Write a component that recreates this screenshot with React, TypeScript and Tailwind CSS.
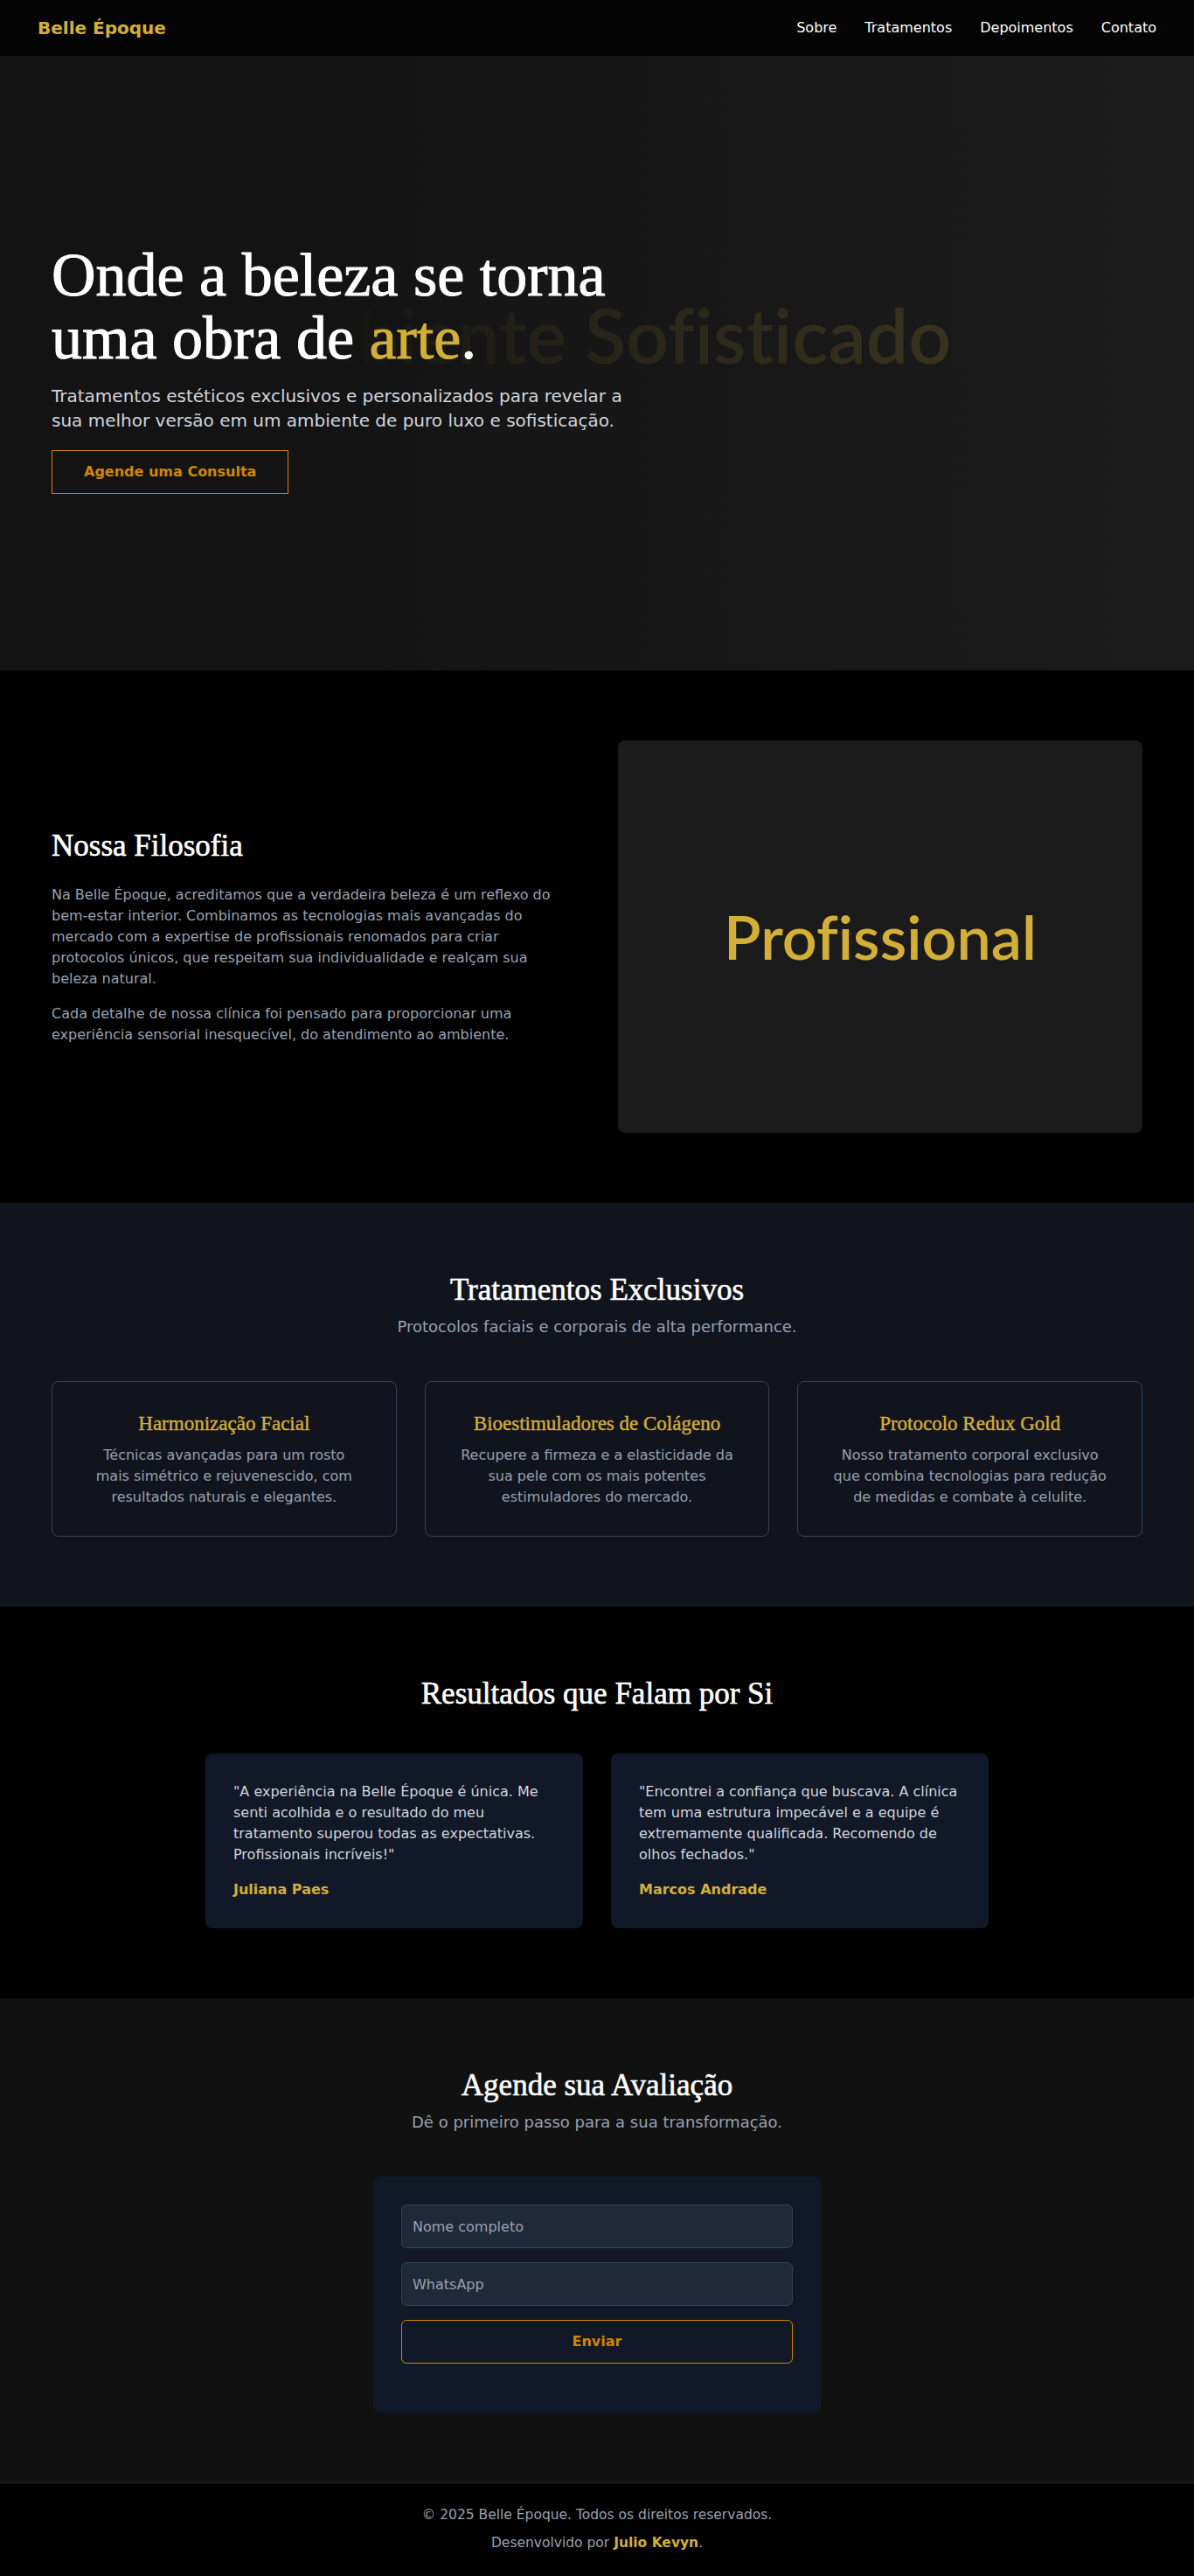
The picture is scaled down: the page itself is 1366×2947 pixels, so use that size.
const treatments = [
  {
    title: "Harmonização Facial",
    text: "Técnicas avançadas para um rosto mais simétrico e rejuvenescido, com resultados naturais e elegantes.",
  },
  {
    title: "Bioestimuladores de Colágeno",
    text: "Recupere a firmeza e a elasticidade da sua pele com os mais potentes estimuladores do mercado.",
  },
  {
    title: "Protocolo Redux Gold",
    text: "Nosso tratamento corporal exclusivo que combina tecnologias para redução de medidas e combate à celulite.",
  },
];

const testimonials = [
  {
    quote: '"A experiência na Belle Époque é única. Me senti acolhida e o resultado do meu tratamento superou todas as expectativas. Profissionais incríveis!"',
    name: "Juliana Paes",
  },
  {
    quote: '"Encontrei a confiança que buscava. A clínica tem uma estrutura impecável e a equipe é extremamente qualificada. Recomendo de olhos fechados."',
    name: "Marcos Andrade",
  },
];

function Header() {
  return (
    <header className="h-16 bg-[#040404]">
      <div className="mx-auto flex h-full max-w-7xl items-center justify-between">
        <a href="#" className="text-xl font-semibold text-[#D4AF37]">
          Belle Époque
        </a>
        <nav className="flex gap-8 text-base text-white">
          <a href="#sobre">Sobre</a>
          <a href="#tratamentos">Tratamentos</a>
          <a href="#depoimentos">Depoimentos</a>
          <a href="#contato">Contato</a>
        </nav>
      </div>
    </header>
  );
}

function Hero() {
  return (
    <section className="relative h-[703px] overflow-hidden bg-[#1c1c1c]">
      {/* placeholder picture behind the overlay */}
      <div className="absolute inset-x-0 top-[276px] flex justify-center">
        <span className="whitespace-nowrap font-['Lato',sans-serif] text-[86px] font-semibold leading-none text-[#D4AF37]/25 [font-variant-ligatures:none]">
          Ambiente Sofisticado
        </span>
      </div>
      <div className="absolute inset-0 bg-gradient-to-r from-[#131313] from-28% via-[#131313]/70 via-44% to-[#131313]/10" />

      <div className="relative mx-auto flex h-full max-w-7xl items-center px-4 pt-3">
        <div className="max-w-2xl">
          <h1 className="mb-4 whitespace-nowrap font-['Liberation_Serif',serif] text-[70px] font-normal leading-[72px] text-white [-webkit-text-stroke:1px_currentColor]">
            Onde a beleza se torna
            <br />
            uma obra de <span className="text-[#D4AF37]">arte</span>.
          </h1>
          <p className="mb-5 text-xl leading-7 text-gray-300">
            Tratamentos estéticos exclusivos e personalizados para revelar a sua melhor versão em um ambiente de puro luxo e sofisticação.
          </p>
          <a
            href="#contato"
            className="inline-block border border-yellow-600 px-9 py-3 text-base font-semibold leading-6 text-yellow-600"
          >
            Agende uma Consulta
          </a>
        </div>
      </div>
    </section>
  );
}

function Philosophy() {
  return (
    <section id="sobre" className="bg-black py-20">
      <div className="mx-auto grid max-w-7xl grid-cols-2 items-center gap-12 px-4">
        <div className="pr-[10px]">
          <h2 className="mb-6 font-['Liberation_Serif',serif] text-[35px] font-normal leading-10 text-white [-webkit-text-stroke:0.6px_currentColor]">
            Nossa Filosofia
          </h2>
          <p className="mb-4 text-base leading-6 text-gray-400">
            Na Belle Époque, acreditamos que a verdadeira beleza é um reflexo do bem-estar interior. Combinamos as tecnologias mais avançadas do mercado com a expertise de profissionais renomados para criar protocolos únicos, que respeitam sua individualidade e realçam sua beleza natural.
          </p>
          <p className="text-base leading-6 text-gray-400">
            Cada detalhe de nossa clínica foi pensado para proporcionar uma experiência sensorial inesquecível, do atendimento ao ambiente.
          </p>
        </div>
        <div className="flex h-[449px] items-center justify-center rounded-lg bg-[#1b1b1b] shadow-lg">
          <span className="font-['Lato',sans-serif] text-[70px] font-semibold text-[#D4AF37] [font-variant-ligatures:none]">
            Profissional
          </span>
        </div>
      </div>
    </section>
  );
}

function Treatments() {
  return (
    <section id="tratamentos" className="bg-[#11141d] py-20">
      <div className="mx-auto max-w-7xl px-4 text-center">
        <h2 className="mb-2 font-['Liberation_Serif',serif] text-[35px] font-normal leading-10 text-white [-webkit-text-stroke:0.6px_currentColor]">
          Tratamentos Exclusivos
        </h2>
        <p className="mb-12 text-lg leading-7 text-gray-400">
          Protocolos faciais e corporais de alta performance.
        </p>
        <div className="grid grid-cols-3 gap-8">
          {treatments.map((t) => (
            <div key={t.title} className="rounded-lg border border-gray-700 px-[38px] py-8">
              <h3 className="mb-2 font-['Liberation_Serif',serif] text-[23px] font-normal leading-8 text-[#D4AF37] [-webkit-text-stroke:0.4px_currentColor]">
                {t.title}
              </h3>
              <p className="text-base leading-6 text-gray-400">{t.text}</p>
            </div>
          ))}
        </div>
      </div>
    </section>
  );
}

function Testimonials() {
  return (
    <section id="depoimentos" className="bg-black py-20">
      <div className="mx-auto max-w-4xl">
        <h2 className="mb-12 text-center font-['Liberation_Serif',serif] text-[35px] font-normal leading-10 text-white [-webkit-text-stroke:0.6px_currentColor]">
          Resultados que Falam por Si
        </h2>
        <div className="grid grid-cols-2 gap-8">
          {testimonials.map((t) => (
            <div key={t.name} className="rounded-lg bg-[#111827] p-8">
              <p className="text-base leading-6 text-gray-300">{t.quote}</p>
              <p className="mt-4 text-base font-semibold leading-6 text-[#D4AF37]">{t.name}</p>
            </div>
          ))}
        </div>
      </div>
    </section>
  );
}

function Contact() {
  return (
    <section id="contato" className="bg-[#111111] py-20">
      <div className="mx-auto max-w-7xl px-4 text-center">
        <h2 className="mb-2 font-['Liberation_Serif',serif] text-[35px] font-normal leading-10 text-white [-webkit-text-stroke:0.6px_currentColor]">
          Agende sua Avaliação
        </h2>
        <p className="mb-12 text-lg leading-7 text-gray-400">
          Dê o primeiro passo para a sua transformação.
        </p>
        <form
          className="mx-auto flex max-w-lg flex-col gap-4 rounded-lg bg-[#111827] px-8 pt-8 pb-14"
          onSubmit={(e) => e.preventDefault()}
        >
          <input
            type="text"
            placeholder="Nome completo"
            className="h-[50px] w-full rounded-md border border-gray-700 bg-gray-800 px-3 text-base text-white placeholder:text-gray-400"
          />
          <input
            type="tel"
            placeholder="WhatsApp"
            className="h-[50px] w-full rounded-md border border-gray-700 bg-gray-800 px-3 text-base text-white placeholder:text-gray-400"
          />
          <button
            type="submit"
            className="h-[50px] w-full rounded-md border border-yellow-600 text-base font-semibold text-yellow-600"
          >
            Enviar
          </button>
        </form>
      </div>
    </section>
  );
}

function Footer() {
  return (
    <footer className="border-t border-gray-800 bg-black pt-[26px] pb-[27px] text-center text-[15.5px] leading-5 text-gray-400">
      <p>© 2025 Belle Époque. Todos os direitos reservados.</p>
      <p className="mt-3">
        Desenvolvido por <span className="font-semibold text-[#D4AF37]">Julio Kevyn</span>.
      </p>
    </footer>
  );
}

export default function App() {
  return (
    <div className="min-h-screen bg-black font-['DejaVu_Sans',sans-serif]">
      <Header />
      <main>
        <Hero />
        <Philosophy />
        <Treatments />
        <Testimonials />
        <Contact />
      </main>
      <Footer />
    </div>
  );
}
